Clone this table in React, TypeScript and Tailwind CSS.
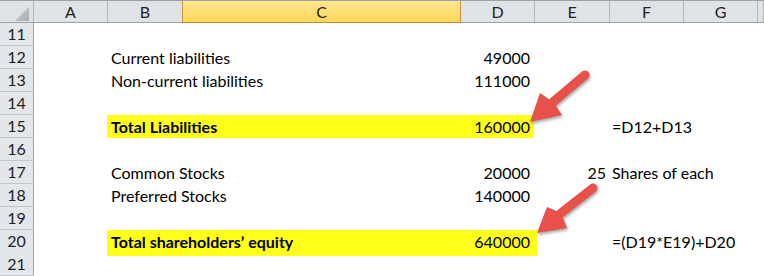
const cols = "grid grid-cols-[34px_74px_75px_278px_74px_75px_74px_74px_1fr]";

type Row = {
  n: number;
  b?: string;
  d?: string;
  e?: string;
  f?: string;
  bold?: boolean;
  hl?: "short" | "tall";
};

const rows: Row[] = [
  { n: 11 },
  { n: 12, b: "Current liabilities", d: "49000" },
  { n: 13, b: "Non-current liabilities", d: "111000" },
  { n: 14 },
  { n: 15, b: "Total Liabilities", d: "160000", f: "=D12+D13", bold: true, hl: "short" },
  { n: 16 },
  { n: 17, b: "Common Stocks", d: "20000", e: "25", f: "Shares of each" },
  { n: 18, b: "Preferred Stocks", d: "140000" },
  { n: 19 },
  { n: 20, b: "Total shareholders’ equity", d: "640000", f: "=(D19*E19)+D20", bold: true, hl: "tall" },
  { n: 21 },
];

const letters = ["A", "B", "C", "D", "E", "F", "G", ""];

const Arrow = ({ tail, neck, tip, w1, w2 }: { tail: number[]; neck: number[]; tip: number[]; w1: number[]; w2: number[] }) => (
  <g>
    <line x1={tail[0]} y1={tail[1]} x2={neck[0]} y2={neck[1]} stroke="#e8504a" strokeWidth={9} strokeLinecap="round" />
    <polygon points={`${tip[0]},${tip[1]} ${w1[0]},${w1[1]} ${neck[0]},${neck[1]} ${w2[0]},${w2[1]}`} fill="#e8504a" />
  </g>
);

export default function App() {
  return (
    <div className="relative w-[764px] h-[276px] overflow-hidden bg-white text-black" style={{ fontFamily: "Lato, 'Open Sans', sans-serif" }}>
      <div className={`${cols} h-[23px] bg-[#dfe3e8] border-t border-[#9da1a6] border-b border-b-[#9ea3a9] text-[16px] leading-[21px] text-[#222]`}>
        <div className="relative border-r border-[#b1b6bd]">
          <svg width="34" height="22" className="absolute left-0 top-0">
            <defs>
              <linearGradient id="corner" x1="0" y1="0" x2="1" y2="1">
                <stop offset="0" stopColor="#c9cdd2" />
                <stop offset="1" stopColor="#a9aeb4" />
              </linearGradient>
            </defs>
            <polygon points="29,6 29,20 15,20" fill="url(#corner)" />
          </svg>
        </div>
        {letters.map((l, i) =>
          l === "C" ? (
            <div key={i} className="text-center bg-gradient-to-b from-[#ffe68f] to-[#ffd659] border-l border-[#c8953a] border-r border-r-[#c8953a] -mb-px border-b border-b-[#c28a30] -ml-px">
              {l}
            </div>
          ) : (
            <div key={i} className="text-center border-r border-[#b1b6bd]">
              {l}
            </div>
          )
        )}
      </div>
      {rows.map((r) => (
        <div key={r.n} className={`${cols} h-[23px] text-[16px] leading-[23px]`}>
          <div className="text-center bg-[#e3e6eb] border-r border-[#9ea3a9] border-b border-b-[#c3c7cd] text-[#222] leading-[22px]">
            {r.n}
          </div>
          <div />
          <div className={`col-span-3 ${r.hl ? "bg-[#ffff1a]" : ""} ${r.hl === "tall" ? "h-[26px] w-[430px]" : "w-[427px]"} -ml-px flex`}>
            <div className={`w-[258px] pl-[4px] whitespace-nowrap ${r.bold ? "font-bold" : ""}`}>{r.b}</div>
            <div className="w-[165px] text-right">{r.d}</div>
          </div>
          <div className="text-right pr-[4px]">{r.e}</div>
          <div className="col-span-3 pl-[2px] whitespace-nowrap">{r.f}</div>
        </div>
      ))}
      <svg width="764" height="276" className="absolute left-0 top-0 pointer-events-none" style={{ filter: "drop-shadow(1px 2px 1.5px rgba(0,0,0,0.35))" }}>
        <Arrow tail={[585, 75]} neck={[553, 102]} tip={[530, 122]} w1={[540, 93]} w2={[562, 115]} />
        <Arrow tail={[593, 188]} neck={[561, 213]} tip={[537, 233]} w1={[547, 207]} w2={[567, 228]} />
      </svg>
    </div>
  );
}
